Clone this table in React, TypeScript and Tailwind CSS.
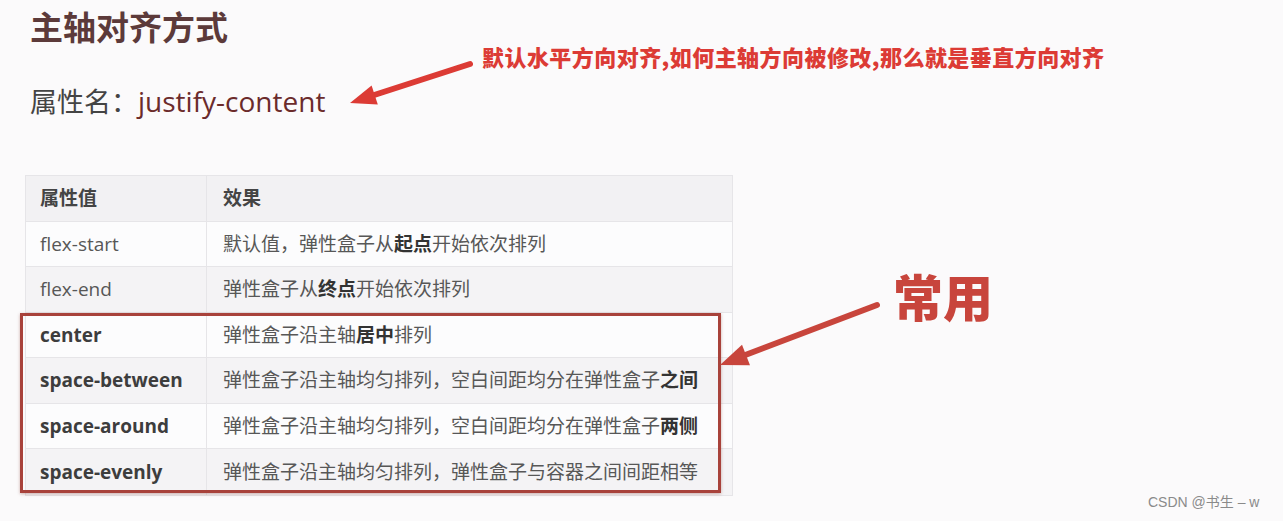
const rows = [
  { name: "flex-start", strong: false, desc: ["默认值，弹性盒子从", "起点", "开始依次排列"] },
  { name: "flex-end", strong: false, desc: ["弹性盒子从", "终点", "开始依次排列"] },
  { name: "center", strong: true, desc: ["弹性盒子沿主轴", "居中", "排列"] },
  { name: "space-between", strong: true, desc: ["弹性盒子沿主轴均匀排列，空白间距均分在弹性盒子", "之间", ""] },
  { name: "space-around", strong: true, desc: ["弹性盒子沿主轴均匀排列，空白间距均分在弹性盒子", "两侧", ""] },
  { name: "space-evenly", strong: true, desc: ["弹性盒子沿主轴均匀排列，弹性盒子与容器之间间距相等", "", ""] },
];

const App = () => {
  return (
    <div className="relative w-[1283px] h-[521px] overflow-hidden bg-[#fbfafb] font-['Open_Sans','Noto_Sans_CJK_SC',sans-serif]">
      {/* title */}
      <div className="pl-[30px] pt-[10px]">
        <h1 className="text-[33px] leading-none font-bold text-[#5c3a3a] font-['Noto_Sans_CJK_SC',sans-serif]">
          主轴对齐方式
        </h1>
        <p className="mt-[44px] flex items-baseline leading-none text-[#444]">
          <span className="text-[27px] font-['Noto_Sans_CJK_SC',sans-serif]">属性名：</span>
          <span className="text-[28px] text-[#6b2b2b]">justify-content</span>
        </p>
      </div>

      <div className="flex items-start mt-[60px]">
        {/* table */}
        <div className="relative ml-[25px] w-[708px] border border-[#e6e5e8] text-[19px] text-[#575757]">
          <div className="flex h-[45.5px] items-center bg-[#f2f1f3] border-b border-[#e6e5e8] font-bold text-[#444]">
            <div className="w-[181px] h-full flex items-center pl-[14px] border-r border-[#e6e5e8]">属性值</div>
            <div className="flex-1 pl-[16px]">效果</div>
          </div>
          {rows.map((row, i) => (
            <div
              key={row.name}
              className={
                "flex h-[45.5px] items-center border-[#e6e5e8] " +
                (i % 2 === 0 ? "bg-[#fcfcfd] " : "bg-[#f4f3f5] ") +
                (i < rows.length - 1 ? "border-b" : "")
              }>
              <div
                className={
                  "w-[181px] h-full flex items-center pl-[14px] border-r border-[#e6e5e8] " +
                  (row.strong ? "font-bold text-[#3d3d3d]" : "")
                }>
                {row.name}
              </div>
              <div className="flex-1 pl-[16px] whitespace-nowrap">
                {row.desc[0]}
                <b className="text-[#333]">{row.desc[1]}</b>
                {row.desc[2]}
              </div>
            </div>
          ))}
          {/* highlight box */}
          <div className="absolute left-[-6px] top-[137px] w-[701px] h-[180px] border-[3px] border-[#a8423b] shadow-[0_1px_3px_rgba(120,40,30,0.35)]" />
        </div>

        {/* 常用 label */}
        <p className="ml-[160px] mt-[95px] text-[50px] leading-none font-black text-[#c8453c] font-['Noto_Sans_CJK_SC',sans-serif]">
          常用
        </p>
      </div>

      {/* annotations */}
      <p className="absolute left-[482px] top-[45px] text-[22px] leading-none font-black text-[#dc3b35] tracking-[0.45px] font-['Noto_Sans_CJK_SC',sans-serif]">
        默认水平方向对齐,如何主轴方向被修改,那么就是垂直方向对齐
      </p>
      <svg className="absolute inset-0 pointer-events-none" width="1283" height="521">
        <line x1="470" y1="64" x2="368" y2="97" stroke="#dc3b35" strokeWidth="6" strokeLinecap="round" />
        <polygon points="350,103 371.6,85.5 377.8,104.5" fill="#dc3b35" />
        <line x1="877" y1="305" x2="740" y2="357" stroke="#c8453c" strokeWidth="6" strokeLinecap="round" />
        <polygon points="720,365 742,344.7 750,365.3" fill="#c8453c" />
      </svg>
      <p className="absolute left-[1148px] top-[495px] text-[14px] leading-none text-[#8a8a8a] font-['Liberation_Sans','Noto_Sans_CJK_SC',sans-serif]">
        CSDN @书生 – w
      </p>
    </div>
  );
};

export default App;
